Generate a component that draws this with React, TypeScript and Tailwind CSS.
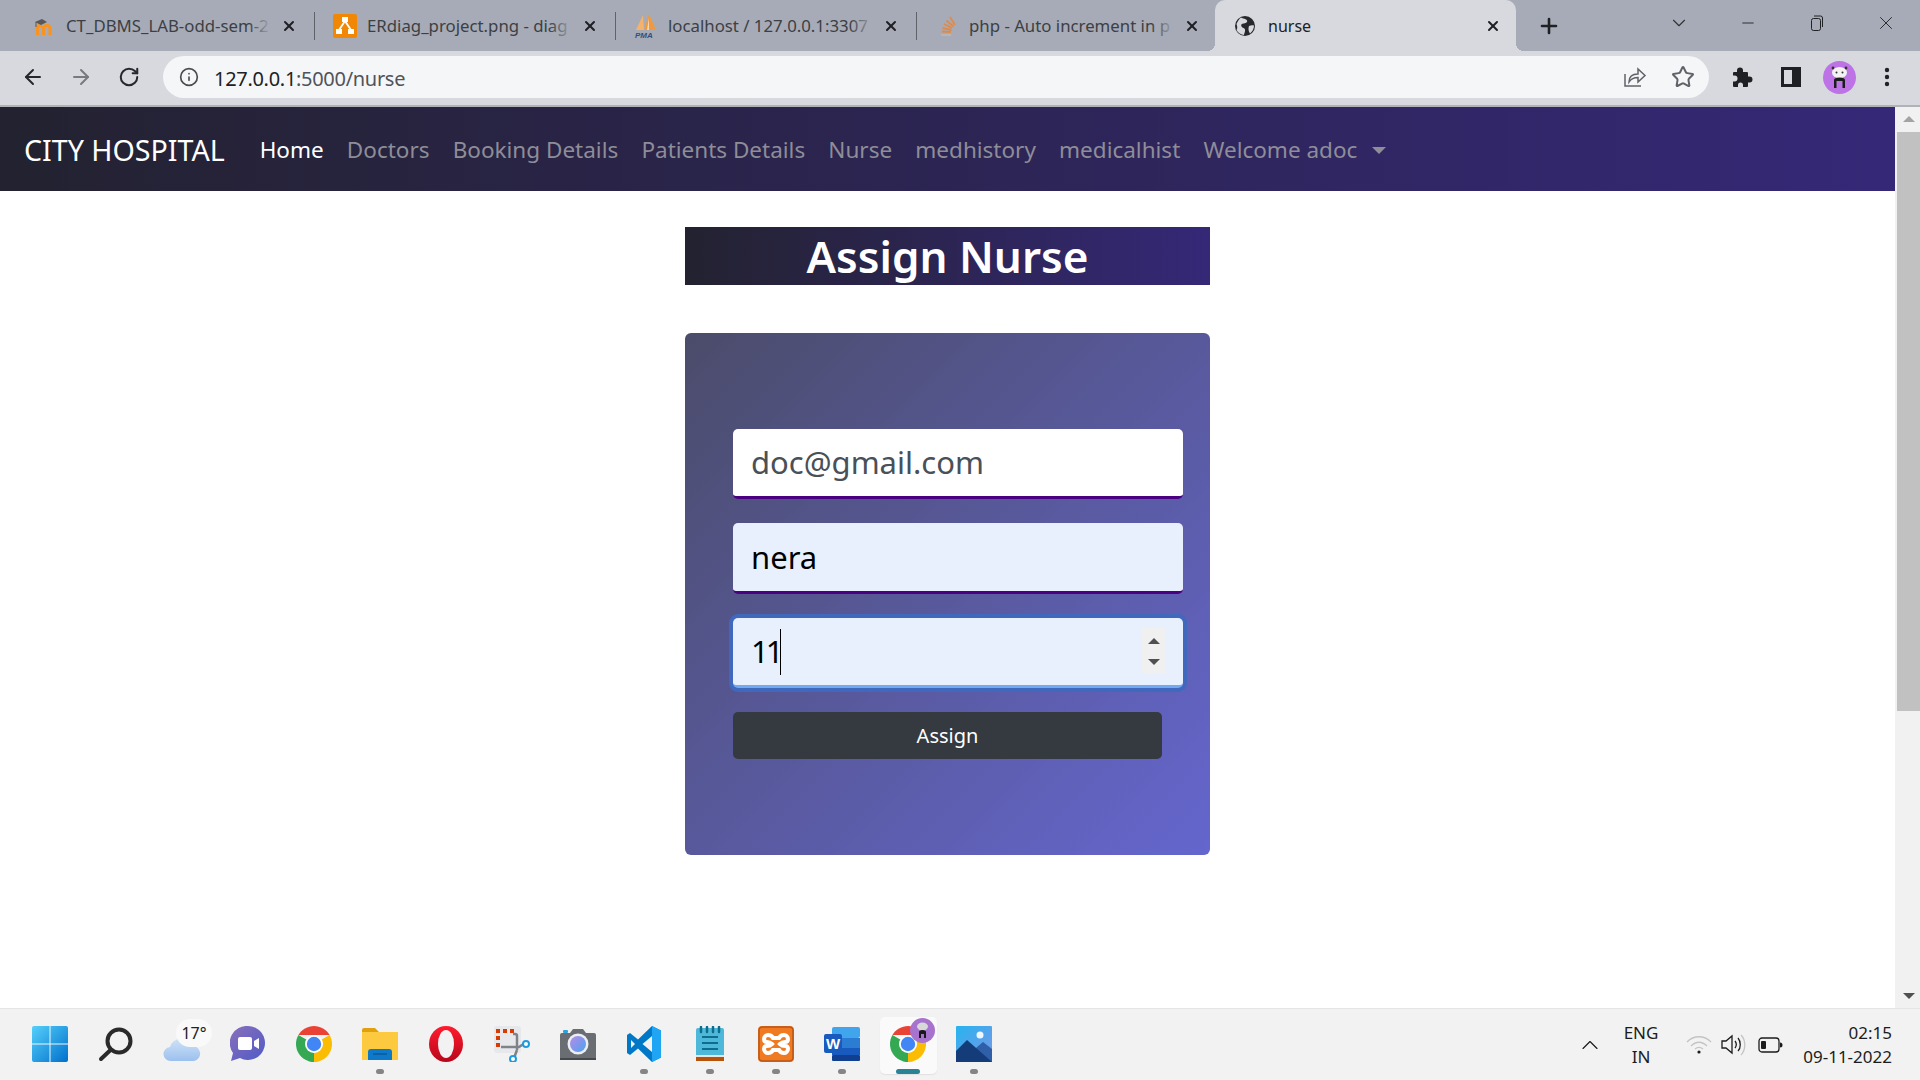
import React from 'react';
import { ArrowLeft, ArrowRight, RotateCw, Info, Star, X, Plus, ChevronDown, Minus, ChevronUp } from 'lucide-react';

const uiFont = 'font-["Noto_Sans",sans-serif]';

const ChromeIcon = ({ size = 36 }: { size?: number }) => (
  <svg width={size} height={size} viewBox="4 4 40 40">
    <path d="M6.7 14A20 20 0 0 1 41.3 14H24Z" fill="#ea4335" />
    <path d="M41.3 14A20 20 0 0 1 24 44L24 24Z" fill="#fbbc04" />
    <path d="M24 44A20 20 0 0 1 6.7 14L24 24Z" fill="#34a853" />
    <circle cx="24" cy="24" r="10" fill="#fff" />
    <circle cx="24" cy="24" r="8" fill="#4285f4" />
  </svg>
);

const MoodleIcon = () => (
  <svg width="20" height="20" viewBox="0 0 20 20">
    <path d="M2 19V11c0-2 1-3 3-3s3 1 3.5 2c.5-1 2-2 4-2 3 0 5 1 5 4v7h-3v-6c0-1.5-.5-2-1.500-2S11 11.500 11 13v6H8v-6c0-1.500-.5-2-1.500-2S5 11.500 5 13v6Z" fill="#f7931e" />
    <path d="M1 6l7-3 5 3-6 3Z" fill="#58585a" />
    <path d="M2 6v5" stroke="#58585a" strokeWidth="1" />
  </svg>
);

const DrawioIcon = () => (
  <svg width="24" height="24" viewBox="0 0 24 24">
    <rect width="24" height="24" rx="2" fill="#f08705" />
    <path d="M12 7 6 16M12 7l6 9" stroke="#fff" strokeWidth="1.8" />
    <rect x="9" y="3" width="6" height="5" fill="#fff" />
    <rect x="3" y="15" width="6" height="5" fill="#fff" />
    <rect x="15" y="15" width="6" height="5" fill="#fff" />
  </svg>
);

const PmaIcon = () => (
  <svg width="26" height="26" viewBox="0 0 26 26">
    <path d="M3 17 10 2l1 15Z" fill="#f6b26b" />
    <path d="M11 17 16 1l7 16Z" fill="#f09a3e" />
    <path d="M14 17 16 5v12Z" fill="#fff" opacity=".6" />
    <text x="2" y="25" fontSize="8" fontWeight="700" fontStyle="italic" fill="#33507a" fontFamily="Liberation Sans, sans-serif">PMA</text>
  </svg>
);

const StackIcon = () => (
  <svg width="20" height="22" viewBox="0 0 20 22" fill="none" stroke="#f48024" strokeWidth="1.8" opacity=".75">
    <path d="M4 20h10" stroke="#bcbbbb" />
    <path d="M5 16.5l9 .5M5.5 13l9 2M7 9l8 4M9.5 5.500l7 6M13 2l5 8" />
  </svg>
);

const GlobeIcon = () => (
  <svg width="22" height="22" viewBox="0 0 22 22">
    <circle cx="11" cy="11" r="10" fill="#26282c" />
    <path d="M7 2.5c2 1.500 5 1 6 3s-2 3-3.500 3-3 1-2 3 3 1 3.500 3-1 4-1 5.500c-3-.5-6-2-7.500-5 1-2 1-3 0-6 1-2 2.500-5 4.500-6.500ZM15 11c2-1 3.500-1 5-.5 0 3-1.500 6-4 8-1.500-2-2-5-1-7.500Z" fill="#d8d9de" />
  </svg>
);

const tabs = [
  { title: 'CT_DBMS_LAB-odd-sem-2', icon: <MoodleIcon /> },
  { title: 'ERdiag_project.png - diag', icon: <DrawioIcon /> },
  { title: 'localhost / 127.0.0.1:3307', icon: <PmaIcon /> },
  { title: 'php - Auto increment in p', icon: <StackIcon /> },
];

const navLinks = ['Doctors', 'Booking Details', 'Patients Details', 'Nurse', 'medhistory', 'medicalhist'];

const Tab = ({ title, icon, last }: { title: string; icon: React.ReactNode; last: boolean }) => (
  <div className="relative flex h-[51px] w-[301px] shrink-0 items-center">
    <div className="flex w-[50px] shrink-0 justify-center pl-[9px]">{icon}</div>
    <div className="relative w-[208px] shrink-0 overflow-hidden whitespace-nowrap pl-[2px] text-[16.8px] text-[#3c4043]">
      {title}
      <div className="absolute inset-y-0 right-0 w-[24px] bg-gradient-to-r from-transparent to-[#a7abb7]" />
    </div>
    <X size={16} strokeWidth={3} className="ml-[9px] text-[#1f2023]" />
    {!last && <div className="absolute right-0 top-[12px] h-[28px] w-[1px] bg-[#5f6368]" />}
  </div>
);

const TabStrip = () => (
  <div className="flex h-[51px] items-center bg-[#a7abb7] pl-[14px]">
    {tabs.map((tab, i) => (
      <Tab key={tab.title} title={tab.title} icon={tab.icon} last={i === tabs.length - 1} />
    ))}
    <div className="relative ml-[-3px] flex h-[51px] w-[301px] shrink-0 items-center rounded-t-[10px] bg-[#d8d9de]">
      <div className="absolute bottom-0 left-[-8px] h-[8px] w-[8px] bg-[radial-gradient(circle_at_0_0,transparent_8px,#d8d9de_8px)]" />
      <div className="absolute bottom-0 right-[-8px] h-[8px] w-[8px] bg-[radial-gradient(circle_at_100%_0,transparent_8px,#d8d9de_8px)]" />
      <div className="ml-[19px] flex w-[22px] justify-center"><GlobeIcon /></div>
      <div className="ml-[12px] w-[217px] text-[16px] text-[#202124]">nurse</div>
      <X size={16} strokeWidth={3} className="text-[#1f2023]" />
    </div>
    <Plus size={24} strokeWidth={2.6} className="ml-[21px] text-[#202124]" />
    <ChevronDown size={22} strokeWidth={1.2} className="ml-[107px] mb-[6px] text-[#303134]" />
    <Minus size={18} strokeWidth={1.2} className="ml-[49px] mb-[6px] text-[#202124]" />
    <svg width="18" height="18" viewBox="0 0 18 18" fill="none" stroke="#202124" className="ml-[51px] mb-[6px]">
      <rect x="3.5" y="4.5" width="9" height="12" rx="2" />
      <path d="M6 2h6.500a2 2 0 0 1 2 2v9" />
    </svg>
    <X size={22} strokeWidth={1} className="ml-[49px] mb-[6px] text-[#202124]" />
  </div>
);

const Toolbar = () => (
  <div className="flex h-[56px] items-center border-b-2 border-[#b1b2b6] bg-[#d8d9de] pb-[2px]">
    <ArrowLeft size={24} strokeWidth={2} className="ml-[21px] text-[#26282c]" />
    <ArrowRight size={24} strokeWidth={2} className="ml-[24px] text-[#787a80]" />
    <RotateCw size={22} strokeWidth={2.2} className="ml-[25px] text-[#26282c]" />
    <div className="ml-[23px] flex h-[42px] w-[1546px] items-center rounded-full bg-[#f5f6f8]">
      <Info size={20} strokeWidth={2} className="ml-[16px] text-[#4a4c50]" />
      <div className="ml-[15px] pt-[3px] text-[20px] tracking-[-0.3px] text-[#202124]">
        127.0.0.1<span className="text-[#50535a]">:5000/nurse</span>
      </div>
      <div className="ml-auto flex items-center">
        <svg width="24" height="24" viewBox="0 0 24 24" fill="none" stroke="#5f6368" strokeWidth="1.5">
          <path d="M2 9v12h16" />
          <path d="M6 17c0-5 3-8 9-8V4l7 6.500-7 6.500v-4.500c-4 0-7 1.500-9 4.500Z" />
        </svg>
        <Star size={24} strokeWidth={2} className="ml-[24px] mr-[14px] text-[#5f6368]" />
      </div>
    </div>
    <svg width="22" height="22" viewBox="0 0 22 22" className="ml-[23px]">
      <path d="M8 1.5a3 3 0 0 1 3 3V6h4a1 1 0 0 1 1 1v3.500h1.500a3 3 0 0 1 0 6H16V20a1 1 0 0 1-1 1h-4v-2a2.500 2.500 0 0 0-5 0v2H2a1 1 0 0 1-1-1v-4.500h1.500a3 3 0 0 0 0-6H1V7a1 1 0 0 1 1-1h3V4.500a3 3 0 0 1 3-3Z" fill="#1f2023" />
    </svg>
    <svg width="22" height="22" viewBox="0 0 22 22" className="ml-[26px]">
      <rect x="1" y="1" width="20" height="20" fill="#1f2023" />
      <rect x="4" y="4" width="8" height="14" fill="#d8d9de" />
    </svg>
    <svg width="33" height="33" viewBox="0 0 33 33" className="ml-[21px]">
      <circle cx="16.5" cy="16.5" r="16.5" fill="#bd72e6" />
      <ellipse cx="16.5" cy="11.5" rx="7.5" ry="5.5" fill="#f3f3f3" />
      <circle cx="10" cy="7" r="1.4" fill="#333" />
      <circle cx="23" cy="7" r="1.400" fill="#333" />
      <circle cx="13.5" cy="11.5" r="1" fill="#333" />
      <circle cx="19.5" cy="11.5" r="1" fill="#333" />
      <path d="M11 27v-8c0-1.500 2-2.500 5.500-2.500s5.500 1 5.500 2.500v8h-2.500v-7h-6v7Z" fill="#1c1c1c" />
    </svg>
    <svg width="6" height="22" viewBox="0 0 6 22" className="ml-[28px]" fill="#202124">
      <circle cx="3" cy="4" r="2.2" />
      <circle cx="3" cy="11" r="2.2" />
      <circle cx="3" cy="18" r="2.2" />
    </svg>
  </div>
);

const Navbar = () => (
  <nav className="flex h-[84px] items-center bg-linear-to-r/srgb from-[#232230] to-[#352877] pl-[24px] pt-[2px]">
    <span className="whitespace-nowrap text-[28.6px] text-white">CITY HOSPITAL</span>
    <div className="ml-[35px] flex items-center gap-[23.2px] text-[22.5px] text-[#8e8d98]">
      <span className="text-white">Home</span>
      {navLinks.map(link => (
        <span key={link} className="whitespace-nowrap">{link}</span>
      ))}
      <span className="flex items-center whitespace-nowrap">
        Welcome adoc
        <span className="ml-[15px] h-0 w-0 border-x-[7px] border-t-[7px] border-x-transparent border-t-[#8e8d98]" />
      </span>
    </div>
  </nav>
);

const Field = ({ value, className }: { value: string; className: string }) => (
  <div className={`flex items-center rounded-[5px] border-b-[3px] pl-[18px] text-[31px] ${className}`}>
    {value}
  </div>
);

const AssignForm = () => (
  <div className="mt-[48px] h-[522px] w-[525px] rounded-[6px] bg-linear-to-br/srgb from-[#4b4c6a] to-[#6566ce] pl-[48px] pt-[96px]">
    <Field value="doc@gmail.com" className="h-[70px] w-[450px] border-[#4b0082] bg-white text-[#495057]" />
    <Field value="nera" className="mt-[24px] h-[71px] w-[450px] border-[#4b0082] bg-[#e8f0fe] text-black" />
    <div className="relative mt-[24px] flex h-[70px] w-[450px] items-center rounded-[5px] border-b-[3px] border-[#73a9ee] bg-[#e8f0fe] pl-[18px] text-[31px] text-black shadow-[0_0_0_4px_#4069bd]">
      <span className="tracking-[-3px]">11</span>
      <span className="h-[46px] w-[1px] bg-black" />
      <div className="absolute right-[18px] top-[10px] flex h-[46px] w-[23px] flex-col items-center justify-center gap-[15px] bg-[#f0f0f0]">
        <span className="h-0 w-0 border-x-[6px] border-b-[6px] border-x-transparent border-b-[#505050]" />
        <span className="h-0 w-0 border-x-[6px] border-t-[6px] border-x-transparent border-t-[#505050]" />
      </div>
    </div>
    <button className="mt-[24px] h-[47px] w-[429px] rounded-[5px] bg-[#343a40] text-[20px] text-white">Assign</button>
  </div>
);

const Scrollbar = () => (
  <div className="flex w-[25px] shrink-0 flex-col items-center bg-[#f1f1f1] pl-[2px]">
    <span className="mt-[9px] h-0 w-0 border-x-[6px] border-b-[6px] border-x-transparent border-b-[#a3a3a3]" />
    <div className="mt-[10px] h-[579px] w-full bg-[#c1c1c1]" />
    <span className="mt-auto mb-[9px] h-0 w-0 border-x-[6px] border-t-[6px] border-x-transparent border-t-[#505050]" />
  </div>
);

const taskIcons: { key: string; dot?: boolean; active?: boolean; icon: React.ReactNode }[] = [
  {
    key: 'start',
    icon: (
      <svg width="36" height="36" viewBox="0 0 36 36">
        <defs>
          <linearGradient id="win" x1="0" y1="0" x2="1" y2="1">
            <stop offset="0" stopColor="#55d0fb" />
            <stop offset="1" stopColor="#0070cc" />
          </linearGradient>
        </defs>
        <rect width="36" height="36" rx="2" fill="url(#win)" />
        <path d="M17.5 0h1v36h-1ZM0 17.500h36v1H0Z" fill="#eef6fb" />
      </svg>
    ),
  },
  {
    key: 'search',
    icon: (
      <svg width="36" height="36" viewBox="0 0 36 36" fill="none" stroke="#2a2a2a">
        <circle cx="21" cy="15" r="11.5" strokeWidth="4" />
        <path d="M12.5 24 3 33" strokeWidth="4" strokeLinecap="round" />
      </svg>
    ),
  },
  {
    key: 'weather',
    icon: (
      <div className="relative h-[36px] w-[36px]">
        <svg width="38" height="26" viewBox="0 0 38 26" className="absolute left-[-1px] top-[10px]">
          <defs>
            <linearGradient id="cloud" x1="0" y1="0" x2="0" y2="1">
              <stop offset="0" stopColor="#cfe2f7" />
              <stop offset="1" stopColor="#9cc0ee" />
            </linearGradient>
          </defs>
          <path d="M8 25a7 7 0 0 1-1-14 11 11 0 0 1 21-1 7.500 7.500 0 0 1 3 15Z" fill="url(#cloud)" />
        </svg>
        <div className="absolute left-[12px] top-[-7px] flex h-[28px] w-[36px] items-center justify-center rounded-full bg-[#f9f9f9] text-[16px] text-[#222]">17°</div>
      </div>
    ),
  },
  {
    key: 'chat',
    icon: (
      <svg width="36" height="36" viewBox="0 0 36 36">
        <defs>
          <linearGradient id="chat" x1="0" y1="0" x2="1" y2="1">
            <stop offset="0" stopColor="#8a6fbb" />
            <stop offset="1" stopColor="#4e5bc6" />
          </linearGradient>
        </defs>
        <path d="M18 0a17 17 0 1 1-8 32l-9 3 2-8A17 17 0 0 1 18 0Z" fill="url(#chat)" />
        <rect x="8" y="11" width="14" height="13" rx="2" fill="#fff" />
        <path d="M24 15l5-3v11l-5-3Z" fill="#fff" />
      </svg>
    ),
  },
  { key: 'chrome', icon: <ChromeIcon /> },
  {
    key: 'files',
    dot: true,
    icon: (
      <svg width="36" height="36" viewBox="0 0 36 36">
        <path d="M0 4a2 2 0 0 1 2-2h11l4 4h19v8H0Z" fill="#dfa10d" />
        <path d="M0 6h36v28H0Z" fill="#fcc93f" />
        <path d="M6 34V26a3 3 0 0 1 3-3h18a3 3 0 0 1 3 3v8Z" fill="#0f79c9" />
        <path d="M11 28h14" stroke="#0a5a99" strokeWidth="1.5" />
      </svg>
    ),
  },
  {
    key: 'opera',
    icon: (
      <svg width="36" height="36" viewBox="0 0 36 36">
        <defs>
          <linearGradient id="opera" x1="0" y1="0" x2="0" y2="1">
            <stop offset="0" stopColor="#ff1b2d" />
            <stop offset="1" stopColor="#b9061a" />
          </linearGradient>
        </defs>
        <ellipse cx="18" cy="18" rx="17" ry="18" fill="url(#opera)" />
        <ellipse cx="18" cy="18" rx="8" ry="14" fill="#f2f2f2" />
      </svg>
    ),
  },
  {
    key: 'snip',
    icon: (
      <svg width="36" height="36" viewBox="0 0 36 36" fill="none">
        <rect x="0" y="0" width="27" height="27" rx="3" fill="#e6e8ec" />
        <path d="M2 3h4v4H2ZM9 3h4v4H9ZM16 3h4v4h-4ZM2 10h4v4H2ZM2 17h4v4H2Z" fill="#d83b01" />
        <path d="M19 8h2a2 2 0 0 1 2 2v14M7 21h18l6-4M23 24l-3 8" stroke="#7f8388" strokeWidth="2.5" />
        <circle cx="32" cy="18" r="3" stroke="#1e9ae0" strokeWidth="2" fill="#fff" />
        <circle cx="19" cy="33" r="3" stroke="#1e9ae0" strokeWidth="2" fill="#fff" />
      </svg>
    ),
  },
  {
    key: 'camera',
    icon: (
      <svg width="36" height="36" viewBox="0 0 36 36">
        <defs>
          <linearGradient id="lens" x1="0" y1="0" x2="1" y2="1">
            <stop offset="0" stopColor="#b88be8" />
            <stop offset="1" stopColor="#4aa3ee" />
          </linearGradient>
        </defs>
        <path d="M0 9a2 2 0 0 1 2-2h8l3-4h10l3 4h8a2 2 0 0 1 2 2v25H0Z" fill="#6a6e73" />
        <rect y="32" width="36" height="2" fill="#45484c" />
        <circle cx="18" cy="18" r="10.5" fill="#eceff2" />
        <circle cx="18" cy="18" r="8" fill="url(#lens)" />
        <rect x="3" y="4" width="5" height="3" rx="1" fill="#2aa3dd" />
      </svg>
    ),
  },
  {
    key: 'vscode',
    dot: true,
    icon: (
      <svg width="36" height="36" viewBox="0 0 36 36">
        <path fillRule="evenodd" d="M26 0l9 4.500v27L26 36 12 22.500 4 29l-3-2V9l3-2 8 6.500ZM26 10l-9.500 8 9.500 8ZM5 14v8l4-4Z" fill="#0078c8" />
        <path d="M26 0l9 4.500v27L26 36Z" fill="#1fa5f3" />
      </svg>
    ),
  },
  {
    key: 'notepad',
    dot: true,
    icon: (
      <svg width="36" height="36" viewBox="0 0 36 36">
        <rect x="4" y="2" width="28" height="29" rx="2" fill="#4db8da" />
        <path d="M4 29h28v2H4Z" fill="#e9e4df" />
        <path d="M4 31h28v4H4Z" fill="#b45309" />
        <path d="M9 1v5M15 1v5M21 1v5M27 1v5" stroke="#0e6d8c" strokeWidth="2.5" strokeLinecap="round" />
        <path d="M10 11h16M10 17h16M10 23h16" stroke="#0e6d8c" strokeWidth="2" />
      </svg>
    ),
  },
  {
    key: 'xampp',
    dot: true,
    icon: (
      <svg width="36" height="36" viewBox="0 0 36 36" fill="none">
        <rect width="36" height="36" rx="4" fill="#ef7a21" />
        <rect x="1" y="1" width="34" height="34" rx="3.5" stroke="#b9571a" strokeWidth="1.5" />
        <path d="M14 18c-2-2-4-2-5-2-2 0-3-1-3-3s2-4 4-4 4 1 5 3h6c1-2 3-3 5-3s4 2 4 4-1 3-3 3c-1 0-3 0-5 2 2 2 4 2 5 2 2 0 3 1 3 3s-2 4-4 4-4-1-5-3h-6c-1 2-3 3-5 3s-4-2-4-4 1-3 3-3c1 0 3 0 5-2Z" stroke="#fff" strokeWidth="4" />
      </svg>
    ),
  },
  {
    key: 'word',
    dot: true,
    icon: (
      <svg width="36" height="36" viewBox="0 0 36 36">
        <rect x="8" y="1" width="28" height="11" rx="2" fill="#41a5ee" />
        <rect x="8" y="12" width="28" height="10" fill="#2b7cd3" />
        <rect x="8" y="22" width="28" height="7" fill="#185abd" />
        <rect x="8" y="29" width="28" height="6" rx="1" fill="#103f91" />
        <rect x="0" y="8" width="18" height="19" rx="2" fill="#185abd" />
        <text x="9" y="23" textAnchor="middle" fontSize="15" fontWeight="700" fill="#fff" fontFamily="Liberation Sans, sans-serif">W</text>
      </svg>
    ),
  },
  {
    key: 'chrome-active',
    active: true,
    icon: (
      <div className="relative h-[36px] w-[36px]">
        <ChromeIcon size={36} />
        <svg width="25" height="25" viewBox="0 0 25 25" className="absolute right-[-9px] top-[-8px]">
          <circle cx="12.5" cy="12.5" r="12.5" fill="#a873cf" />
          <ellipse cx="12.5" cy="8.5" rx="5.5" ry="4" fill="#d8d8d8" />
          <path d="M9 20v-6c0-1 1-2 3.500-2s3.500 1 3.500 2v6h-2v-4h-3v4Z" fill="#1a1a1a" />
        </svg>
      </div>
    ),
  },
  {
    key: 'photos',
    dot: true,
    icon: (
      <svg width="36" height="36" viewBox="0 0 36 36">
        <defs>
          <linearGradient id="sky" x1="0" y1="0" x2="1" y2="1">
            <stop offset="0" stopColor="#26b4ef" />
            <stop offset="1" stopColor="#7c95e8" />
          </linearGradient>
        </defs>
        <rect width="36" height="36" rx="1" fill="url(#sky)" />
        <circle cx="24" cy="9" r="3.5" fill="#eef7fd" />
        <path d="M20 22l7-6 9 7v13H22Z" fill="#2f5fa8" />
        <path d="M0 25l11-11 25 22H0Z" fill="#133c78" />
      </svg>
    ),
  },
];

const Taskbar = () => (
  <div className="flex h-[72px] shrink-0 items-center border-t border-[#e5e5e5] bg-[#f2f2f2] pl-[17px] text-[#1c1c1c]">
    {taskIcons.map(item => (
      <div key={item.key} className="relative flex h-[71px] w-[66px] shrink-0 items-center justify-center pb-[1px]">
        {item.active && <div className="absolute left-[5px] top-[8px] h-[57px] w-[57px] rounded-[5px] bg-[#fafafa] shadow-[0_1px_1px_#e2e2e2]" />}
        <div className="relative">{item.icon}</div>
        {item.dot && <div className="absolute bottom-[6px] left-[29px] h-[5px] w-[8px] rounded-full bg-[#858585]" />}
        {item.active && <div className="absolute bottom-[6px] left-[21px] h-[5px] w-[24px] rounded-full bg-[#2a8394]" />}
      </div>
    ))}
    <ChevronUp size={28} strokeWidth={1} className="ml-auto text-[#1c1c1c]" />
    <div className="ml-[4px] w-[66px] text-center text-[17px] leading-[24px]">ENG<br />IN</div>
    <svg width="26" height="22" viewBox="0 0 26 22" fill="none" stroke="#c4c4c4" strokeWidth="1.3" className="ml-[12px]">
      <path d="M1 8c7-7 17-7 24 0M5 12c5-5 11-5 16 0M9 15c3-2.500 5-2.500 8 0" />
      <circle cx="13" cy="18" r="1.6" fill="#1c1c1c" stroke="none" />
    </svg>
    <svg width="26" height="24" viewBox="0 0 26 24" fill="none" stroke="#1c1c1c" strokeWidth="1.3" className="ml-[9px]">
      <path d="M1 8v7h4l6 5V3L5 8Z" />
      <path d="M14 8c1.500 2 1.500 5 0 7M17 5c3 3.500 3 10 0 13" />
      <path d="M20 2c5 5 5 15 0 20" stroke="#c4c4c4" />
    </svg>
    <svg width="25" height="16" viewBox="0 0 25 16" fill="none" className="ml-[11px]">
      <rect x="1" y="1" width="20" height="14" rx="3" stroke="#1c1c1c" strokeWidth="1.3" />
      <rect x="3" y="4" width="5" height="8" rx="1" fill="#1c1c1c" />
      <path d="M22 5.500a2.500 2.500 0 0 1 0 5Z" fill="#1c1c1c" />
    </svg>
    <div className="ml-[17px] mr-[28px] w-[92px] text-right text-[17px] leading-[24px]">02:15<br />09-11-2022</div>
  </div>
);

export default function App() {
  return (
    <div className={`flex h-screen w-full flex-col overflow-hidden bg-white ${uiFont}`}>
      <TabStrip />
      <Toolbar />
      <div className="flex min-h-0 flex-1">
        <div className="min-w-0 flex-1">
          <Navbar />
          <main className="flex flex-col items-center pt-[36px]">
            <h1 className="h-[58px] w-[525px] bg-linear-to-r/srgb from-[#232230] to-[#352877] text-center text-[44px] font-semibold leading-[58px] text-white">Assign Nurse</h1>
            <AssignForm />
          </main>
        </div>
        <Scrollbar />
      </div>
      <Taskbar />
    </div>
  );
}
